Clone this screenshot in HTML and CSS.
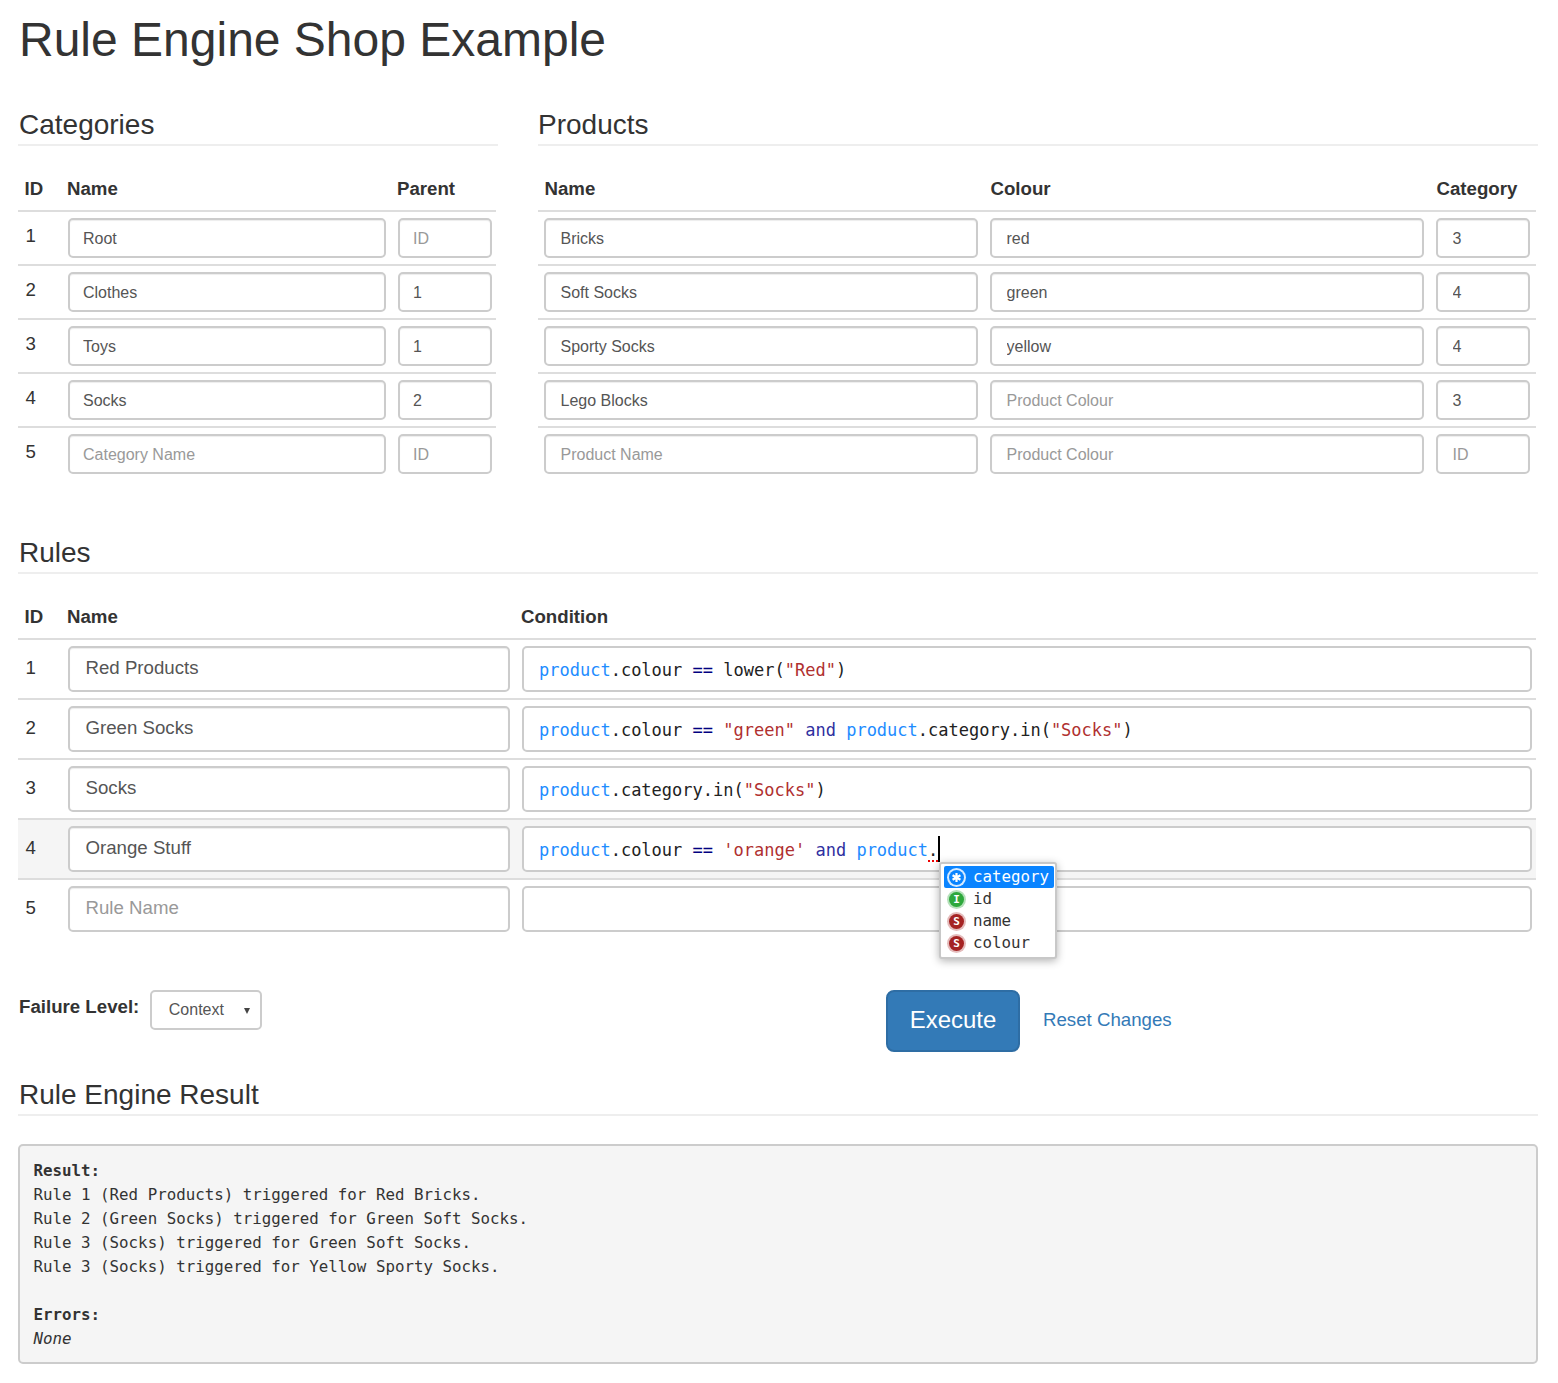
FILE: index.html
```html
<!DOCTYPE html>
<html lang="en">
<head>
<meta charset="utf-8">
<title>Rule Engine Shop Example</title>
<link rel="stylesheet" href="styles.css">
</head>
<body>
<h1 class="title">Rule Engine Shop Example</h1>
<div class="columns">
  <section class="col-categories">
    <h2 class="section-title">Categories</h2>
    <table class="grid grid-categories">
      <colgroup><col class="c-id"><col class="c-name"><col></colgroup>
      <thead><tr><th class="id">ID</th><th>Name</th><th>Parent</th></tr></thead>
      <tbody>
        <tr><td class="id">1</td><td><input class="field" value="Root"></td><td class="last"><input class="field" placeholder="ID"></td></tr>
        <tr><td class="id">2</td><td><input class="field" value="Clothes"></td><td class="last"><input class="field" value="1"></td></tr>
        <tr><td class="id">3</td><td><input class="field" value="Toys"></td><td class="last"><input class="field" value="1"></td></tr>
        <tr><td class="id">4</td><td><input class="field" value="Socks"></td><td class="last"><input class="field" value="2"></td></tr>
        <tr><td class="id">5</td><td><input class="field" placeholder="Category Name"></td><td class="last"><input class="field" placeholder="ID"></td></tr>
      </tbody>
    </table>
  </section>
  <section class="col-products">
    <h2 class="section-title">Products</h2>
    <table class="grid grid-products">
      <colgroup><col class="p-name"><col class="p-colour"><col></colgroup>
      <thead><tr><th>Name</th><th>Colour</th><th>Category</th></tr></thead>
      <tbody>
        <tr><td><input class="field" value="Bricks"></td><td><input class="field" value="red"></td><td><input class="field" value="3"></td></tr>
        <tr><td><input class="field" value="Soft Socks"></td><td><input class="field" value="green"></td><td><input class="field" value="4"></td></tr>
        <tr><td><input class="field" value="Sporty Socks"></td><td><input class="field" value="yellow"></td><td><input class="field" value="4"></td></tr>
        <tr><td><input class="field" value="Lego Blocks"></td><td><input class="field" placeholder="Product Colour"></td><td><input class="field" value="3"></td></tr>
        <tr><td><input class="field" placeholder="Product Name"></td><td><input class="field" placeholder="Product Colour"></td><td><input class="field" placeholder="ID"></td></tr>
      </tbody>
    </table>
  </section>
</div>

<section class="rules">
  <h2 class="section-title">Rules</h2>
  <table class="grid grid-rules">
    <colgroup><col class="c-id"><col class="r-name"><col></colgroup>
    <thead><tr><th class="id">ID</th><th>Name</th><th>Condition</th></tr></thead>
    <tbody>
      <tr><td class="id">1</td><td><input class="field field-lg" value="Red Products"></td><td class="last"><div class="editor"><span class="t-var">product</span>.colour <span class="t-op">==</span> lower(<span class="t-str">"Red"</span>)</div></td></tr>
      <tr><td class="id">2</td><td><input class="field field-lg" value="Green Socks"></td><td class="last"><div class="editor"><span class="t-var">product</span>.colour <span class="t-op">==</span> <span class="t-str">"green"</span> <span class="t-kw">and</span> <span class="t-var">product</span>.category.in(<span class="t-str">"Socks"</span>)</div></td></tr>
      <tr><td class="id">3</td><td><input class="field field-lg" value="Socks"></td><td class="last"><div class="editor"><span class="t-var">product</span>.category.in(<span class="t-str">"Socks"</span>)</div></td></tr>
      <tr class="active"><td class="id">4</td><td><input class="field field-lg" value="Orange Stuff"></td><td class="last"><div class="editor"><span class="t-var">product</span>.colour <span class="t-op">==</span> <span class="t-str">'orange'</span> <span class="t-kw">and</span> <span class="t-var">product</span>.<span class="squiggle"></span><span class="caret"></span><ul class="suggest"><li class="suggest-item selected"><span class="badge badge-star"><svg class="star" viewBox="0 0 12 12" aria-hidden="true"><path d="M6 1v10M1.7 3.5l8.6 5M10.3 3.5l-8.6 5"/></svg></span>category</li><li class="suggest-item"><span class="badge badge-int">I</span>id</li><li class="suggest-item"><span class="badge badge-str">S</span>name</li><li class="suggest-item"><span class="badge badge-str">S</span>colour</li></ul></div></td></tr>
      <tr><td class="id">5</td><td><input class="field field-lg" placeholder="Rule Name"></td><td class="last"><div class="editor"></div></td></tr>
    </tbody>
  </table>
</section>

<div class="controls">
  <div class="failure">
    <label class="failure-label" for="level">Failure Level:</label>
    <div class="select-wrap"><select id="level" class="select"><option>Context</option></select></div>
  </div>
  <button class="btn-execute" type="button">Execute</button>
  <a class="reset" href="#">Reset Changes</a>
</div>

<section class="result">
  <h2 class="section-title">Rule Engine Result</h2>
  <pre class="output"><b>Result:</b>
Rule 1 (Red Products) triggered for Red Bricks.
Rule 2 (Green Socks) triggered for Green Soft Socks.
Rule 3 (Socks) triggered for Green Soft Socks.
Rule 3 (Socks) triggered for Yellow Sporty Socks.

<b>Errors:</b>
<i>None</i></pre>
</section>
</body>
</html>
```
FILE: styles.css
```css
* { box-sizing: border-box; }
html, body { margin: 0; padding: 0; }
body {
  padding: 13px 20px 19px 18px;
  font-family: "Liberation Sans", Arial, sans-serif;
  font-size: 18.67px;
  line-height: 26px;
  color: #333;
  background: #fff;
}
.title {
  margin: 0 0 41px 1px;
  font-size: 48px;
  line-height: 53px;
  font-weight: 400;
}
.section-title {
  margin: 0 0 22px;
  padding: 2px 0 4px 1px;
  font-size: 28px;
  line-height: 31px;
  font-weight: 400;
  border-bottom: 2px solid #eee;
}
.col-products .section-title { padding-left: 0; }
.columns { display: flex; gap: 40px; }
.col-categories { width: 480px; }
.col-products { width: 1000px; }
.grid { border-collapse: collapse; table-layout: fixed; }
.grid-categories { width: 478px; }
.grid-products { width: 998px; }
.grid-rules { width: 1518px; }
.c-id { width: 44px; }
.c-name { width: 330px; }
.p-name { width: 446px; }
.p-colour { width: 446px; }
.r-name { width: 454px; }
.grid th {
  padding: 8px 5px;
  font-weight: 700;
  text-align: left;
  border-bottom: 2px solid #ddd;
}
.grid th:first-child { padding-left: 6.5px; }
.grid-products th + th { padding-left: 6.5px; }
.grid td {
  padding: 6px;
  vertical-align: top;
  border-bottom: 2px solid #ddd;
}
.grid tbody tr:last-child td { border-bottom: 0; }
.grid td.id { padding-top: 11px; padding-left: 7.5px; }
.grid-rules td.id { padding-top: 15px; }
.grid td.last { padding-right: 4px; }
.grid tr.active td { background: #f5f5f5; }
.field {
  display: block;
  width: 100%;
  height: 40px;
  padding: 2px 13px 0;
  font: 16px/24px "Liberation Sans", Arial, sans-serif;
  color: #555;
  background: #fff;
  border: 2px solid #ccc;
  border-radius: 5px;
  box-shadow: inset 0 1px 1px rgba(0, 0, 0, .075);
  outline: 0;
}
.grid-products .field { padding-left: 14.5px; }
.field::placeholder { color: #999; opacity: 1; }
.field-lg {
  height: 46px;
  padding: 0 16px 2px 15.5px;
  font-size: 18.67px;
}
.editor {
  position: relative;
  height: 46px;
  padding: 11px 15px 0;
  font-family: "DejaVu Sans Mono", monospace;
  font-size: 17px;
  line-height: 22px;
  white-space: pre;
  color: #222;
  background: #fff;
  border: 2px solid #ccc;
  border-radius: 5px;
}
.t-var { color: #1e8cff; }
.t-str { color: #b03030; }
.t-kw { color: #2f2f9f; }
.t-op { color: #000080; }
.squiggle {
  position: absolute;
  top: 32px;
  left: 404px;
  width: 11px;
  height: 2px;
  background: repeating-linear-gradient(90deg, #e00 0 2px, transparent 2px 4px);
}
.caret {
  position: absolute;
  top: 8px;
  left: 414px;
  width: 2px;
  height: 26px;
  background: #000;
}
.suggest {
  position: absolute;
  left: 415px;
  top: 34px;
  z-index: 2;
  width: 118px;
  height: 97px;
  margin: 0;
  padding: 2px 1px 2px 3px;
  list-style: none;
  font-size: 15.8px;
  line-height: 22px;
  background: #fff;
  border: 2px solid #c8c8c8;
  border-radius: 3px;
  box-shadow: 0 2px 8px rgba(0, 0, 0, .3);
}
.suggest-item {
  display: flex;
  align-items: center;
  height: 22px;
  padding-left: 2px;
  color: #333;
  border-radius: 2px;
}
.suggest-item.selected { color: #fff; background: #0a84ff; }
.badge {
  display: flex;
  align-items: center;
  justify-content: center;
  flex: none;
  width: 15px;
  height: 15px;
  margin: 0 9px 0 3px;
  font-size: 11px;
  font-weight: 700;
  line-height: 15px;
  color: #fff;
  border-radius: 50%;
}
.badge-star { background: #0a84ff; box-shadow: 0 0 0 2px #d6eaff; }
.badge-int { background: #2ea83c; box-shadow: 0 0 0 2px #b5e0ba; }
.badge-str { background: #a52323; box-shadow: 0 0 0 2px #e4bcbc; }
.star {
  width: 11px;
  height: 11px;
  fill: none;
  stroke: #fff;
  stroke-width: 2.4;
}
.rules { margin-top: 55px; }
.controls {
  display: flex;
  align-items: flex-start;
  margin-top: 52px;
}
.failure {
  display: flex;
  align-items: flex-start;
  width: 868px;
}
.failure-label {
  margin: 4px 11px 0 1px;
  font-weight: 700;
}
.select-wrap { position: relative; width: 112px; }
.select-wrap::after {
  content: "";
  position: absolute;
  top: 18px;
  right: 12px;
  border: 3.5px solid transparent;
  border-top: 6px solid #444;
  border-bottom: 0;
  pointer-events: none;
}
.select {
  display: block;
  width: 100%;
  height: 40px;
  padding: 0 16.5px;
  appearance: none;
  font: 16px/24px "Liberation Sans", Arial, sans-serif;
  color: #555;
  background: #fff;
  border: 2px solid #ccc;
  border-radius: 5px;
}
.btn-execute {
  width: 134px;
  height: 62px;
  padding: 0 0 2px;
  font: 24px/32px "Liberation Sans", Arial, sans-serif;
  color: #fff;
  background: #337ab7;
  border: 2px solid #2e6da4;
  border-radius: 8px;
}
.reset {
  margin: 17px 0 0 23px;
  color: #337ab7;
  text-decoration: none;
}
.result { margin-top: 25px; }
.result .section-title { margin-bottom: 28px; }
.output {
  height: 220px;
  margin: 0;
  padding: 13px 13.5px 11px;
  font-family: "DejaVu Sans Mono", monospace;
  font-size: 15.8px;
  line-height: 24px;
  color: #333;
  background: #f5f5f5;
  border: 2px solid #ccc;
  border-radius: 5px;
}
```
